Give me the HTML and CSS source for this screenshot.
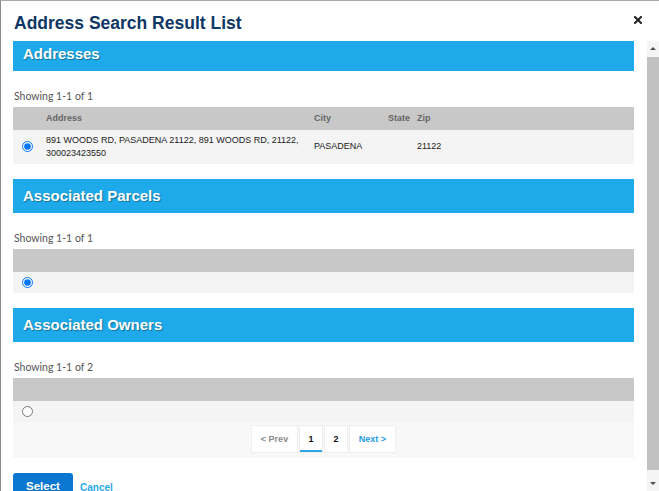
FILE: index.html
```html
<!DOCTYPE html>
<html lang="en">
<head>
    <meta charset="UTF-8">
    <meta name="viewport" content="width=device-width, initial-scale=1.0">
    <title>Address Search Result List</title>
    <link rel="stylesheet" href="styles.css">
</head>
<body>
    <div class="modal">
        <div class="modal-head">
            <h1>Address Search Result List</h1>
            <svg class="close" width="8" height="8" viewBox="0 0 8 8">
                <path d="M1 1 L7 7 M7 1 L1 7" stroke="#222" stroke-width="2" stroke-linecap="square"/>
            </svg>
        </div>

        <div class="modal-main">
            <div class="modal-body">
                <div class="content">
                    <!-- addresses -->
                    <section class="result-section">
                        <h2 class="band">Addresses</h2>
                        <p class="showing">Showing 1-1 of 1</p>
                        <table class="results">
                            <thead>
                                <tr>
                                    <th class="col-radio"></th>
                                    <th class="col-address">Address</th>
                                    <th class="col-city">City</th>
                                    <th class="col-state">State</th>
                                    <th>Zip</th>
                                </tr>
                            </thead>
                            <tbody>
                                <tr class="row-tall">
                                    <td class="col-radio"><input type="radio" name="address" checked></td>
                                    <td class="col-address">891 WOODS RD, PASADENA 21122, 891 WOODS RD, 21122, 300023423550</td>
                                    <td>PASADENA</td>
                                    <td></td>
                                    <td>21122</td>
                                </tr>
                            </tbody>
                        </table>
                    </section>

                    <!-- parcels -->
                    <section class="result-section">
                        <h2 class="band">Associated Parcels</h2>
                        <p class="showing">Showing 1-1 of 1</p>
                        <table class="results">
                            <thead>
                                <tr><th></th></tr>
                            </thead>
                            <tbody>
                                <tr>
                                    <td class="col-radio"><input type="radio" name="parcel" checked></td>
                                </tr>
                            </tbody>
                        </table>
                    </section>

                    <!-- owners -->
                    <section class="result-section">
                        <h2 class="band">Associated Owners</h2>
                        <p class="showing">Showing 1-1 of 2</p>
                        <table class="results">
                            <thead>
                                <tr><th></th></tr>
                            </thead>
                            <tbody>
                                <tr>
                                    <td class="col-radio"><input type="radio" name="owner"></td>
                                </tr>
                            </tbody>
                        </table>
                        <div class="pager">
                            <span class="page-btn prev">&lt; Prev</span>
                            <span class="page-btn num active">1</span>
                            <span class="page-btn num">2</span>
                            <span class="page-btn next">Next &gt;</span>
                        </div>
                    </section>

                    <div class="actions">
                        <button type="button" class="btn-select">Select</button>
                        <a href="#" class="cancel">Cancel</a>
                    </div>
                </div>
            </div>

            <!-- scrollbar drawn by hand, the screenshot browser hides the real one -->
            <div class="scrollbar">
                <div class="sb-btn"><span class="arrow-up"></span></div>
                <div class="sb-track"><div class="sb-thumb"></div></div>
                <div class="sb-btn"><span class="arrow-down"></span></div>
            </div>
        </div>
    </div>
</body>
</html>
```

FILE: styles.css
```css
* {
    box-sizing: border-box;
}

body {
    margin: 0;
    font-family: "Liberation Sans", Arial, sans-serif;
    background: #fff;
}

.modal {
    height: 100vh;
    display: flex;
    flex-direction: column;
    border-left: 1px solid #8c8c8c;
    border-top: 1px solid #a8a8a8;
}

.modal-head {
    height: 40px;
    flex-shrink: 0;
    display: flex;
    justify-content: space-between;
    align-items: flex-start;
    padding: 12px 17px 0 13px;
}

.modal-head h1 {
    margin: 0;
    font-size: 17.5px;
    line-height: 20px;
    font-weight: bold;
    color: #0f3766;
}

.close {
    margin-top: 3px;
}

.modal-main {
    flex: 1;
    min-height: 0;
    display: flex;
}

.modal-body {
    flex: 1;
    min-width: 0;
    overflow: hidden;
    padding: 0 13px 0 12px;
}

/* scrollbar */
.scrollbar {
    width: 12px;
    display: flex;
    flex-direction: column;
    background: #f5f5f5;
}

.sb-btn {
    height: 15px;
    display: flex;
    align-items: center;
    justify-content: center;
}

.arrow-up {
    border-left: 3px solid transparent;
    border-right: 3px solid transparent;
    border-bottom: 3px solid #505050;
}

.arrow-down {
    border-left: 3px solid transparent;
    border-right: 3px solid transparent;
    border-top: 3px solid #505050;
}

.sb-track {
    flex: 1;
    display: flex;
    padding: 1px 0 6px;
}

.sb-thumb {
    flex: 1;
    background: #c1c1c1;
}

.content {
    margin-top: -4px;
}

.result-section {
    margin-bottom: 15.5px;
}

.band {
    margin: 0;
    height: 34px;
    padding-left: 10px;
    background: #1eaaea;
    color: #fff;
    font-size: 15px;
    line-height: 34px;
    font-weight: bold;
    text-shadow: 1px 1px 1px rgba(0, 0, 0, 0.35);
}

.showing {
    margin: 0 0 4px;
    padding: 18.5px 0 0 1px;
    font-family: Lato, "Open Sans", sans-serif;
    font-size: 10.5px;
    line-height: 13px;
    color: #555;
}

.results {
    width: 100%;
    border-collapse: collapse;
    table-layout: fixed;
    font-size: 9px;
    color: #222;
}

.results th {
    height: 23px;
    background: #c8c8c8;
    color: #666;
    font-weight: bold;
    text-align: left;
    padding: 0 6px;
}

.results td {
    height: 21px;
    background: #f4f4f4;
    padding: 0 6px;
    line-height: 13px;
    vertical-align: middle;
}

.results .row-tall td {
    height: 34px;
}

.results .col-radio {
    width: 27px;
    padding: 0 0 0 9px;
}

.results .col-address {
    width: 268px;
    padding-right: 2px;
}

.results .col-city {
    width: 74px;
}

.results .col-state {
    width: 29px;
}

.results input[type="radio"] {
    width: 11px;
    height: 11px;
    margin: 0;
    vertical-align: middle;
}

.pager {
    display: flex;
    justify-content: center;
    gap: 1px;
    padding: 3px 0 5px;
    background: #f8f8f8;
}

.page-btn {
    height: 28px;
    display: flex;
    align-items: center;
    justify-content: center;
    background: #fff;
    border: 1px solid #efefef;
    font-size: 9px;
    font-weight: bold;
    color: #111;
}

.page-btn.prev {
    width: 47px;
    color: #8a8a8a;
}

.page-btn.num {
    width: 24px;
}

.page-btn.active {
    box-shadow: inset 0 -2px #31a6e6;
}

.page-btn.next {
    width: 47px;
    color: #1e9ce8;
}

.actions {
    display: flex;
    align-items: center;
}

.btn-select {
    width: 60px;
    height: 28px;
    border: none;
    border-radius: 3px;
    background: #0c77d1;
    color: #fff;
    font-family: "Liberation Sans", Arial, sans-serif;
    font-size: 11.5px;
    font-weight: bold;
    padding: 0 0 2px;
}

.cancel {
    margin-left: 7px;
    font-size: 10px;
    font-weight: bold;
    color: #29a8e8;
    text-decoration: none;
}
```
